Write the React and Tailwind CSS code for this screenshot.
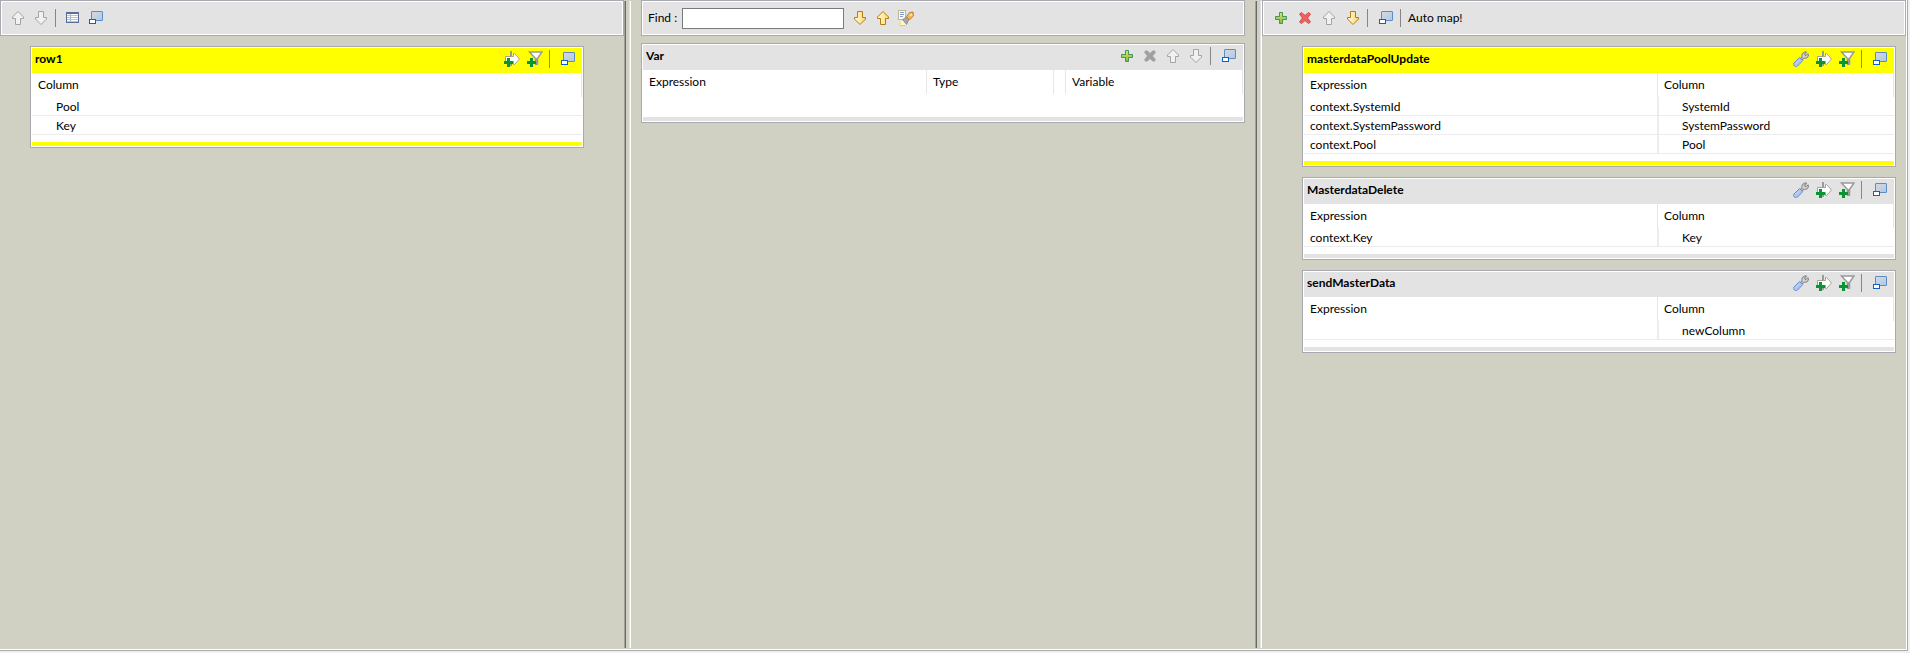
import React from "react";

const Svg = ({ children }) => (
  <svg viewBox="0 0 16 16" className="block size-4" aria-hidden="true">
    {children}
  </svg>
);

const UP = "M8 1.5 L13.5 7 V8.5 H10.5 V14.5 H5.5 V8.5 H2.5 V7 Z";
const DOWN = "M8 14.5 L13.5 9 V7.5 H10.5 V1.5 H5.5 V7.5 H2.5 V9 Z";

function ArrowIcon({ down, gold }) {
  return (
    <Svg>
      <defs>
        <linearGradient id="goldFill" x1="0" y1="0" x2="1" y2="0">
          <stop offset="0" stopColor="#fffbe0" />
          <stop offset="1" stopColor="#fbd96a" />
        </linearGradient>
      </defs>
      <path
        d={down ? DOWN : UP}
        fill={gold ? "url(#goldFill)" : "#f1f1f1"}
        stroke={gold ? "#b87a14" : "#a3a3a3"}
        strokeLinejoin="round"
      />
    </Svg>
  );
}

const PlusIcon = () => (
  <Svg>
    <defs>
      <linearGradient id="plusFill" x1="0" y1="0" x2="0" y2="1">
        <stop offset="0" stopColor="#d8e86a" />
        <stop offset="1" stopColor="#86b838" />
      </linearGradient>
    </defs>
    <path
      d="M6.5 2.5 H9.5 V6.5 H13.5 V9.5 H9.5 V13.5 H6.5 V9.5 H2.5 V6.5 H6.5 Z"
      fill="url(#plusFill)"
      stroke="#43935a"
      strokeLinejoin="round"
    />
  </Svg>
);

const CrossIcon = ({ disabled }) => (
  <Svg>
    <path
      d="M4.5 2.5 L8 5.5 L11.5 2.5 L13.5 4 L10.5 8 L13.5 12 L11.5 13.5 L8 10.5 L4.5 13.5 L2.5 12 L5.5 8 L2.5 4 Z"
      fill={disabled ? "#a0a0a0" : "#f0625f"}
      stroke={disabled ? "#a0a0a0" : "#d44a4c"}
      strokeLinejoin="round"
    />
  </Svg>
);

const TableIcon = () => (
  <Svg>
    <rect x="1.5" y="2.5" width="12" height="10" fill="#fff" stroke="#5a6f96" />
    <path d="M1 3 H14" stroke="#5a6f96" strokeWidth="2" />
    <path d="M2 5.5 H13 M2 7.5 H13 M2 9.5 H13 M2 11.5 H13" stroke="#b9c3d6" />
    <path d="M5.5 4 V12" stroke="#a9b5cb" />
  </Svg>
);

const RestoreIcon = () => (
  <Svg>
    <defs>
      <linearGradient id="winFill" x1="0" y1="0" x2="1" y2="1">
        <stop offset="0" stopColor="#d6dade" />
        <stop offset="1" stopColor="#b0c8e6" />
      </linearGradient>
    </defs>
    <rect x="3.5" y="1.5" width="11" height="9" rx="0.5" fill="url(#winFill)" stroke="#5b8cc4" />
    <rect x="1.5" y="9.5" width="6" height="4" fill="#fff" stroke="#0a62cc" />
  </Svg>
);

const SmallPlus = () => <path d="M3 7 H6 V10 H9 V13 H6 V16 H3 V13 H0 V10 H3 Z" fill="#0a9434" />;

const AddExpressionIcon = () => (
  <Svg>
    <rect x="6" y="0" width="2" height="15" fill="#9a9a9a" />
    <path d="M1.5 5.5 H9.5 V2.5 H10.5 L15.5 8 L10.5 13.5 H9.5 V10.5 H1.5 Z" fill="#fff" stroke="#a5a195" />
    <rect x="6" y="0" width="2" height="5" fill="#9a9a9a" />
    <SmallPlus />
  </Svg>
);

const AddFilterIcon = () => (
  <Svg>
    <path d="M2.5 1 H15 L10.5 7.5 V13 H8.5 V7.5 Z" fill="#fff" stroke="#999" strokeWidth="1.5" />
    <rect x="8" y="7" width="3" height="7" fill="#999" />
    <SmallPlus />
  </Svg>
);

const WrenchIcon = () => (
  <Svg>
    <path
      d="M7 8 L9 6 C8.5 3.5 10 1 12.5 0.7 L13.5 1.2 L11.5 3.3 L12.5 4.6 L15 3 L15.6 4 C15.3 6.5 13 7.6 10.8 7.2 L9 9 Z"
      fill="#d2d2d2"
      stroke="#8c8c8c"
      strokeWidth="1.1"
    />
    <path
      d="M6.5 6.5 L9.8 9.6 L4.6 15 C3 16.2 0 15.4 0.5 12.5 Z"
      fill="#a9c4ee"
      stroke="#6f8fcc"
      strokeWidth="1"
    />
    <path d="M2.5 13 L6.6 9" stroke="#c6d9f8" />
  </Svg>
);

const HighlightIcon = () => (
  <Svg>
    <rect x="0.5" y="0.5" width="7" height="9" fill="#fbfcff" stroke="#c3b68c" />
    <path d="M2 2.5 H6 M2 4.5 H6 M2 6.5 H5" stroke="#7f9bd0" />
    <path d="M0 15.5 L4 10 L8 12 L8 15.5 Z" fill="#fff8c4" />
    <path d="M0.5 15.5 L2.5 12.5 M2 15.5 H7.5" stroke="#ecca3c" />
    <path d="M4.5 9.5 L8.5 7 L11 9.5 L8.5 14.5 Z" fill="#a8a4a8" stroke="#8d878c" strokeWidth="0.8" />
    <path d="M8.5 6.5 L11.5 2.5 L15 2 L15.6 5.6 L11.4 10 Z" fill="#f4b65a" stroke="#b9791f" strokeWidth="0.9" />
    <path d="M12 5.8 L13.8 4" stroke="#fff2cf" strokeWidth="1.4" />
  </Svg>
);

function IconButton({ label, wide, children }) {
  return (
    <button
      type="button"
      aria-label={label}
      className={(wide ? "pr-[5px]" : "pr-1") + " shrink-0 py-[3px] pl-[3px]"}
    >
      {children}
    </button>
  );
}

const Separator = ({ tight }) => (
  <span className={(tight ? "mr-[6px]" : "mr-[7px]") + " ml-[2px] h-[18px] w-px shrink-0 bg-[#868686]"} />
);

function Toolbar({ label, className = "", children }) {
  return (
    <div role="toolbar" aria-label={label} className={className + " h-9 border border-[#a9a9b1] bg-white p-px"}>
      <div className="flex h-full items-center bg-[#e3e3e3]">{children}</div>
    </div>
  );
}

function Panel({ title, active, actions, children }) {
  const accent = active ? "bg-[#ffff00]" : "bg-[#e3e3e3]";
  return (
    <section className="border border-[#a9a9b1] bg-white p-px">
      <header className={accent + " flex h-[25px] items-center pr-[2px] pb-[3px] pl-[3px]"}>
        <h2 className="flex-1 truncate font-bold">{title}</h2>
        {actions}
      </header>
      {children}
      <div className={accent + " h-1"} />
    </section>
  );
}

const th = "h-6 border-r border-[#e6e6e6] px-[6px] text-left font-normal";
const td = "h-[19px] border-b border-[#ececee] pt-px";

function TableActions({ settings }) {
  return (
    <>
      {settings && (
        <IconButton label="Settings">
          <WrenchIcon />
        </IconButton>
      )}
      <IconButton label="Add expression">
        <AddExpressionIcon />
      </IconButton>
      <IconButton label="Add filter">
        <AddFilterIcon />
      </IconButton>
      <Separator />
      <IconButton label="Minimize">
        <RestoreIcon />
      </IconButton>
    </>
  );
}

function InputPanel({ title, columns }) {
  return (
    <Panel title={title} active actions={<TableActions />}>
      <table className="mb-[7px] w-full table-fixed border-separate border-spacing-0">
        <thead>
          <tr>
            <th className={th}>Column</th>
          </tr>
        </thead>
        <tbody>
          {columns.map((c) => (
            <tr key={c}>
              <td className={td + " pl-[24px]"}>{c}</td>
            </tr>
          ))}
        </tbody>
      </table>
    </Panel>
  );
}

function OutputPanel({ title, active, rows }) {
  return (
    <Panel title={title} active={active} actions={<TableActions settings />}>
      <table className="mb-[7px] w-full table-fixed border-separate border-spacing-0">
        <thead>
          <tr>
            <th className={th + " w-3/5"}>Expression</th>
            <th className={th}>Column</th>
          </tr>
        </thead>
        <tbody>
          {rows.map(([expression, column]) => (
            <tr key={column}>
              <td className={td + " border-r px-[6px]"}>{expression}</td>
              <td className={td + " border-l pl-[23px]"}>{column}</td>
            </tr>
          ))}
        </tbody>
      </table>
    </Panel>
  );
}

const Sash = () => (
  <div className="flex pt-px pb-px">
    <div className="w-px bg-[#a3a39b]" />
    <div className="w-px bg-[#696969]" />
    <div className="flex-1 bg-[#d1d1c3]" />
    <div className="w-px bg-[#e3e3e3]" />
    <div className="w-px bg-white" />
  </div>
);

export default function App() {
  return (
    <div className="flex min-h-screen flex-col bg-[#f0f0f0] pr-[2px] pb-[2px] font-[Lato,'Open_Sans',sans-serif] text-[12px] leading-4 text-black">
      <main className="grid flex-1 grid-cols-[624fr_7px_624fr_7px_644fr] border-r border-b border-[#a9a9b1] bg-[#d1d1c3] pr-px pb-px shadow-[inset_-1px_-1px_0_#fff]">
        <div className="min-w-0">
          <Toolbar label="Inputs">
            <div className="flex items-center pl-[5px]">
              <IconButton label="Move up">
                <ArrowIcon />
              </IconButton>
              <IconButton label="Move down">
                <ArrowIcon down />
              </IconButton>
              <Separator tight />
              <IconButton label="Show table">
                <TableIcon />
              </IconButton>
              <IconButton label="Minimize all">
                <RestoreIcon />
              </IconButton>
            </div>
          </Toolbar>
          <div className="pt-[10px] pr-10 pl-[30px]">
            <InputPanel title="row1" columns={["Pool", "Key"]} />
          </div>
        </div>

        <Sash />

        <div className="min-w-0 px-[10px]">
          <Toolbar label="Find" className="mb-[7px]">
            <label htmlFor="find" className="w-[39px] shrink-0 pl-[5px]">
              Find :
            </label>
            <input id="find" type="text" className="mr-[5px] h-[21px] w-[162px] border border-[#7a7a7a] bg-white px-1" />
            <IconButton label="Find next">
              <ArrowIcon down gold />
            </IconButton>
            <IconButton label="Find previous">
              <ArrowIcon gold />
            </IconButton>
            <IconButton label="Highlight all">
              <HighlightIcon />
            </IconButton>
          </Toolbar>
          <Panel
            title="Var"
            actions={
              <>
                <IconButton label="Add variable">
                  <PlusIcon />
                </IconButton>
                <IconButton label="Remove variable">
                  <CrossIcon disabled />
                </IconButton>
                <IconButton label="Move up">
                  <ArrowIcon />
                </IconButton>
                <IconButton label="Move down">
                  <ArrowIcon down />
                </IconButton>
                <Separator />
                <IconButton label="Minimize">
                  <RestoreIcon />
                </IconButton>
              </>
            }
          >
            <table className="mb-[23px] w-full table-fixed border-separate border-spacing-0">
              <thead>
                <tr>
                  <th className={th + " w-[284px]"}>Expression</th>
                  <th className={th + " w-[127px]"}>Type</th>
                  <td className="w-3 border-r border-[#e6e6e6]" />
                  <th className={th}>Variable</th>
                </tr>
              </thead>
            </table>
          </Panel>
        </div>

        <Sash />

        <div className="min-w-0">
          <Toolbar label="Outputs">
            <div className="flex items-center pl-[6px]">
              <IconButton label="Add output" wide>
                <PlusIcon />
              </IconButton>
              <IconButton label="Remove output" wide>
                <CrossIcon />
              </IconButton>
              <IconButton label="Move up" wide>
                <ArrowIcon />
              </IconButton>
              <IconButton label="Move down">
                <ArrowIcon down gold />
              </IconButton>
              <Separator />
              <IconButton label="Minimize all">
                <RestoreIcon />
              </IconButton>
              <Separator />
              <button type="button">Auto map!</button>
            </div>
          </Toolbar>
          <div className="flex flex-col gap-[10px] pt-[10px] pr-[10px] pl-10">
            <OutputPanel
              title="masterdataPoolUpdate"
              active
              rows={[
                ["context.SystemId", "SystemId"],
                ["context.SystemPassword", "SystemPassword"],
                ["context.Pool", "Pool"],
              ]}
            />
            <OutputPanel title="MasterdataDelete" rows={[["context.Key", "Key"]]} />
            <OutputPanel title="sendMasterData" rows={[["", "newColumn"]]} />
          </div>
        </div>
      </main>
    </div>
  );
}
